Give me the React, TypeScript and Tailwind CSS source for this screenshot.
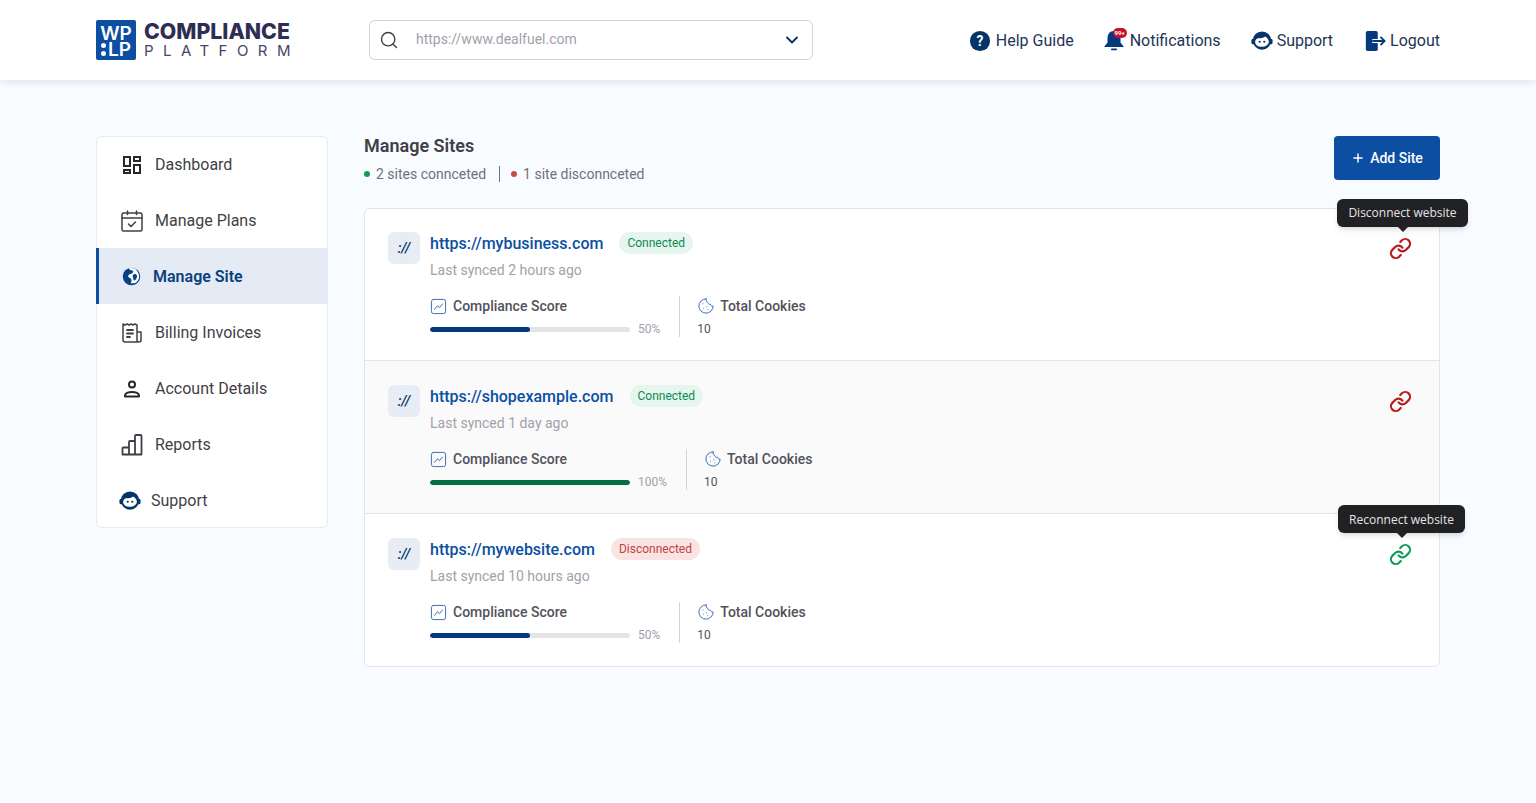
import { ChevronDown, Search, Plus } from "lucide-react";

const Icon = ({ children, className = "" }: { children: React.ReactNode; className?: string }) => (
  <svg viewBox="0 0 24 24" fill="none" stroke="currentColor" strokeWidth="2" strokeLinecap="round" strokeLinejoin="round" className={className}>
    {children}
  </svg>
);

function AgentIcon({ className = "" }: { className?: string }) {
  return (
    <svg viewBox="0 0 24 24" className={className}>
      <ellipse cx="12" cy="11.500" rx="10" ry="10" fill="#043468" />
      <path d="M4.500 13c0-2.200 1.600-3.800 3.600-4 2.700-.1 5.200-.3 7.200-2 1.800 1 4.200 2.900 4.200 5.600 0 3.500-3.400 5.800-7.600 5.800S4.500 16.200 4.500 13Z" fill="#fff" />
      <circle cx="9.500" cy="12.800" r="1.200" fill="#043468" />
      <circle cx="14.500" cy="12.800" r="1.200" fill="#043468" />
      <rect x="0.500" y="9.500" width="3.500" height="6" rx="1.700" fill="#043468" />
      <rect x="20" y="9.500" width="3.500" height="6" rx="1.700" fill="#043468" />
    </svg>
  );
}

function LinkIcon({ className = "" }: { className?: string }) {
  return (
    <Icon className={className}>
      <g strokeWidth="2.300">
        <path d="M10 13a5 5 0 0 0 7.540.54l3-3a5 5 0 0 0-7.070-7.070l-1.720 1.710" />
        <path d="M14 11a5 5 0 0 0-7.540-.54l-3 3a5 5 0 0 0 7.070 7.070l1.710-1.710" />
      </g>
    </Icon>
  );
}

const navIcons: Record<string, React.ReactNode> = {
  Dashboard: (
    <Icon className="w-6 h-6 text-[#27272a]">
      <g strokeLinecap="square" strokeLinejoin="miter">
        <rect x="4" y="4" width="6" height="9" />
        <rect x="14" y="4" width="6" height="4" />
        <rect x="14" y="12" width="6" height="8" />
        <rect x="4" y="17" width="6" height="3" />
      </g>
    </Icon>
  ),
  "Manage Plans": (
    <Icon className="w-6 h-6 text-[#3f3f46]">
      <g strokeWidth="1.500">
        <rect x="2" y="4" width="20" height="18" rx="1.500" />
        <path d="M2 9h20M7.500 2v3.500M16.500 2v3.500M8.500 15l2.500 2.500 4.500-4.500" />
      </g>
    </Icon>
  ),
  "Billing Invoices": (
    <Icon className="w-6 h-6 text-[#3f3f46]">
      <g strokeWidth="1.500">
        <path d="M17 21H5a2 2 0 0 1-2-2V3l2 1 2-1 2 1 2-1 2 1 2-1 2 1v15a2 2 0 0 0 2 2 2 2 0 0 0 2-2v-8h-4" />
        <path d="M7 9h6M7 12.500h6M7 16h3" strokeWidth="1.800" />
      </g>
    </Icon>
  ),
  "Account Details": (
    <Icon className="w-6 h-6 text-[#27272a]">
      <circle cx="12" cy="7.500" r="3" />
      <path d="M5 19.500v-1c0-2 3-3.500 7-3.500s7 1.500 7 3.500v1Z" />
    </Icon>
  ),
  Reports: (
    <Icon className="w-6 h-6 text-[#3f3f46]">
      <path strokeWidth="1.800" d="M2.500 21.500v-6a1 1 0 0 1 1-1H9V9a1 1 0 0 1 1-1h5V3a1 1 0 0 1 1-1h4.500a1 1 0 0 1 1 1v18.500ZM9 14.500v7M15 8v13.500" />
    </Icon>
  ),
};

const navItems = ["Dashboard", "Manage Plans", "Manage Site", "Billing Invoices", "Account Details", "Reports", "Support"];

const sites = [
  { url: "https://mybusiness.com", synced: "Last synced 2 hours ago", status: "Connected", score: 50, bg: "bg-transparent", tooltip: "Disconnect website" },
  { url: "https://shopexample.com", synced: "Last synced 1 day ago", status: "Connected", score: 100, bg: "bg-[#fafafa]", tooltip: "" },
  { url: "https://mywebsite.com", synced: "Last synced 10 hours ago", status: "Disconnected", score: 50, bg: "bg-transparent", tooltip: "Reconnect website" },
];

function SiteRow({ site, first, last }: { site: (typeof sites)[number]; first: boolean; last: boolean }) {
  const connected = site.status === "Connected";
  return (
    <div className={`relative flex pl-[23px] pt-[24px] ${site.bg} ${first ? "-mt-px" : ""} ${last ? "h-[152px]" : "h-[153px] border-b border-[#e2e4e8]"}`}>
      <div className="w-8 h-8 rounded-md bg-[#e8edf5] flex items-center justify-center text-[14px] font-medium italic text-[#043468]">://</div>
      <div className="ml-[10px] flex-1">
        <div className="flex items-center h-[24px]">
          <span className="text-[16px] font-medium leading-6 text-[#0b4fa3]">{site.url}</span>
          <span className={`ml-4 -mt-[2px] h-[22px] px-2 rounded-full text-[12px] leading-[22px] ${connected ? "bg-[#e6f5ee] text-[#0d8a55]" : "bg-[#f9e3e3] text-[#c0453f]"}`}>{site.status}</span>
        </div>
        <div className="text-[14px] leading-5 mt-[4px] text-[#a1a1aa]">{site.synced}</div>
        <div className="flex mt-[16px]">
          <div>
            <div className="flex items-center h-5">
              <Icon className="w-[17px] h-[17px] text-[#3b6fb5] mr-[6px]">
                <g strokeWidth="1.400">
                  <rect x="2" y="2" width="20" height="20" rx="3" />
                  <path d="M6.500 16l4-5 3 2.500 4-5" />
                </g>
              </Icon>
              <span className="text-[14px] font-medium text-[#52525b]">Compliance Score</span>
            </div>
            <div className="flex items-center mt-[6px] h-[14px]">
              <div className="w-[200px] h-[5px] rounded-full bg-[#e4e4e7] overflow-hidden">
                <div className={`h-full rounded-full ${site.score === 100 ? "bg-[#05703f]" : "bg-[#043a7c]"}`} style={{ width: `${site.score}%` }} />
              </div>
              <span className="ml-2 text-[12px] text-[#a1a1aa]">{site.score}%</span>
            </div>
          </div>
          <div className="w-px h-[41px] bg-[#d4d4d8] ml-[19px]" />
          <div className="ml-[17px]">
            <div className="flex items-center h-5">
              <Icon className="w-[18px] h-[18px] text-[#3b6fb5] mr-[5px]">
                <g strokeWidth="1.300">
                  <path d="M12 2.500a9.500 9.500 0 1 0 9.500 9.500c-1.600.4-3.200-.6-3.500-2.200-1.700.3-3.400-.8-3.700-2.500-1.500-.4-2.500-2.600-2.300-4.800Z" />
                  <path d="M8 9h.01M8.500 15h.01M13 13h.01M14.500 17h.01" />
                </g>
              </Icon>
              <span className="text-[14px] font-medium text-[#52525b]">Total Cookies</span>
            </div>
            <div className="text-[12px] leading-4 mt-[5px] text-[#52525b]">10</div>
          </div>
        </div>
      </div>
      <LinkIcon className={`absolute right-[27px] top-[29px] w-[23px] h-[23px] ${connected ? "text-[#b91c1c]" : "text-[#0f9d58]"}`} />
      {site.tooltip && (
        <div className={`absolute -top-[9px] z-10 ${connected ? "right-[-29px]" : "right-[-26px]"}`}>
          <div className={`relative h-[28px] rounded-md bg-[#212124] text-[12px] text-center text-[#e4e4e7] shadow-md [font-family:'Open_Sans',sans-serif] ${connected ? "w-[131px] leading-[28px]" : "w-[127px] leading-[30px]"}`}>
            {site.tooltip}
            <span className="absolute left-1/2 -bottom-[5px] -ml-[5px] w-0 h-0 border-x-[5px] border-x-transparent border-t-[5px] border-t-[#212124]" />
          </div>
        </div>
      )}
    </div>
  );
}

export default function App() {
  return (
    <div className="min-h-[803px] bg-[#f8fbff] [font-family:Roboto,sans-serif]">
      <header className="h-20 bg-white shadow-[0_1px_8px_rgba(30,50,90,0.14)] flex items-center pl-24 pr-24 relative">
        <div className="flex items-center w-[273px]">
          <div className="w-10 h-10 pt-[3px] rounded-[2px] bg-[#0b4ea2] text-white font-semibold text-[19px] leading-[16px] flex flex-col items-center justify-center [font-family:Inter,sans-serif]">
            <span>WP</span>
            <span className="flex items-center">
              <span className="flex flex-col gap-[3px] mr-[2px]">
                <span className="w-[5px] h-[5px] rounded-full bg-white" />
                <span className="w-[5px] h-[5px] rounded-full bg-white" />
              </span>
              LP
            </span>
          </div>
          <div className="ml-2 text-[#2e2e54] [font-family:Inter,sans-serif]">
            <div className="text-[21.300px] font-extrabold leading-[21px]">COMPLIANCE</div>
            <div className="text-[15px] leading-[17px] tracking-[0.63em] font-normal text-[#45456a]">PLATFORM</div>
          </div>
        </div>
        <div className="w-[444px] h-10 rounded-md border border-[#d4d4d8] bg-white flex items-center pl-[9px] pr-[10px]">
          <Search className="w-[20px] h-[20px] text-[#3f3f46]" strokeWidth={1.700} />
          <span className="ml-[17px] flex-1 text-[14px] leading-5 -mt-[2px] text-[#a1a1aa]">https://www.dealfuel.com</span>
          <ChevronDown className="w-5 h-5 text-[#043468]" strokeWidth={2.200} />
        </div>
        <nav className="ml-auto mt-px flex items-center text-[16px] text-[#1d3557]">
          <div className="flex items-center">
            <svg viewBox="0 0 24 24" className="w-[22px] h-[22px]">
              <circle cx="12" cy="12" r="11" fill="#043468" />
              <text x="12" y="17.500" textAnchor="middle" fontSize="15" fontWeight="700" fill="#fff">?</text>
            </svg>
            <span className="ml-[5px]">Help Guide</span>
          </div>
          <div className="flex items-center ml-[30px] relative">
            <svg viewBox="0 0 22 24" className="w-[22px] h-[24px]">
              <path d="M10 2c4.500 0 6.500 3.500 6.500 7.500v4l3.500 4.500H0l3.500-4.500v-4C3.500 5.500 5.500 2 10 2Z" fill="#043a7c" />
              <rect x="7" y="19.500" width="6" height="1.800" rx="0.900" fill="#043a7c" />
            </svg>
            <span className="absolute left-[9px] top-[-1px] w-[14px] h-[10px] rounded-full bg-[#c8102e] text-white text-[6px] leading-[10px] font-bold text-center">99+</span>
            <span className="ml-[4px]">Notifications</span>
          </div>
          <div className="flex items-center ml-[30px]">
            <AgentIcon className="w-[22px] h-[22px]" />
            <span className="ml-[4px]">Support</span>
          </div>
          <div className="flex items-center ml-[31px]">
            <svg viewBox="0 0 24 24" className="w-[22px] h-[22px]">
              <path d="M2 3a2 2 0 0 1 2-2h9a2 2 0 0 1 2 2v18a2 2 0 0 1-2 2H4a2 2 0 0 1-2-2Z" fill="#043a7c" />
              <path d="M9 12h13M18 7.500 22.500 12 18 16.500" stroke="#fff" strokeWidth="4.500" fill="none" />
              <path d="M9 12h13M18 7.500 22.500 12 18 16.500" stroke="#043a7c" strokeWidth="2" fill="none" />
            </svg>
            <span className="ml-[4px]">Logout</span>
          </div>
        </nav>
      </header>

      <div className="flex pl-24 pr-24 pt-14 gap-9">
        <aside className="w-[232px] h-[392px] shrink-0 bg-white border border-[#e6ebf2] rounded-md">
          {navItems.map((name) => {
            if (name === "Manage Site")
              return (
                <div key={name} className="h-14 -mt-px mb-px pt-px flex items-center bg-[#e5ebf4] border-l-[3px] border-[#0b4ea2] pl-[23px] text-[16px] font-semibold text-[#0b3f80] -ml-px">
                  <svg viewBox="0 0 24 24" className="w-[19px] h-[19px]">
                    <circle cx="12" cy="12" r="11" fill="#0b4184" />
                    <path d="M9 2.500c1 2 4 1 5 2.500 1.200 2-2 3.500-4 4-2 .6-3 2.500-1.500 4 1.300 1.300 3 1 3.500 3 .4 1.500-.5 3-1 4.500 3-.2 5 1 7.500-1.500 2-2 4-5 3-8.500-.7-3-3-7-5.500-8.500-2.500-1-5-1-7-.5Z" fill="#fff" />
                    <path d="M15 9c1.500-.5 3.500 0 4 2 .4 2-1.400 5-3 6-1 .4-1.800-1-1.800-2.500 0-1.500-1.200-2.500-.8-3.500.3-.8.800-1.700 1.600-2Z" fill="#0b4184" />
                  </svg>
                  <span className="ml-[12px]">{name}</span>
                </div>
              );
            if (name === "Support")
              return (
                <div key={name} className="h-14 flex items-center pl-[22px] text-[16px] text-[#3f3f46]">
                  <AgentIcon className="w-[22px] h-[22px]" />
                  <span className="ml-[10px]">{name}</span>
                </div>
              );
            return (
              <div key={name} className="h-14 flex items-center pl-[23px] text-[16px] text-[#3f3f46]">
                {navIcons[name]}
                <span className="ml-[11px]">{name}</span>
              </div>
            );
          })}
        </aside>

        <main className="flex-1">
          <div className="flex justify-between h-[72px]">
            <div>
              <h1 className="text-[18px] leading-5 font-semibold text-[#3f3f46]">Manage Sites</h1>
              <div className="flex items-center mt-[10px] h-4 text-[14px] text-[#71717a]">
                <span className="w-[6px] h-[6px] rounded-full bg-[#0f9d58]" />
                <span className="ml-[6px]">2 sites connceted</span>
                <span className="w-px h-4 bg-[#71717a] ml-[13px] mr-[11px]" />
                <span className="w-[6px] h-[6px] rounded-full bg-[#c94b4b]" />
                <span className="ml-[6px]">1 site disconnceted</span>
              </div>
            </div>
            <button className="w-[106px] h-11 rounded bg-[#0b4ea2] text-white text-[14px] font-medium flex items-center justify-center">
              <Plus className="w-[14px] h-[14px] mr-[5px]" strokeWidth={2.500} />
              Add Site
            </button>
          </div>
          <div className="bg-white border border-[#e2e4e8] rounded-md">
            {sites.map((s, i) => (
              <SiteRow key={s.url} site={s} first={i === 0} last={i === sites.length - 1} />
            ))}
          </div>
        </main>
      </div>
    </div>
  );
}
